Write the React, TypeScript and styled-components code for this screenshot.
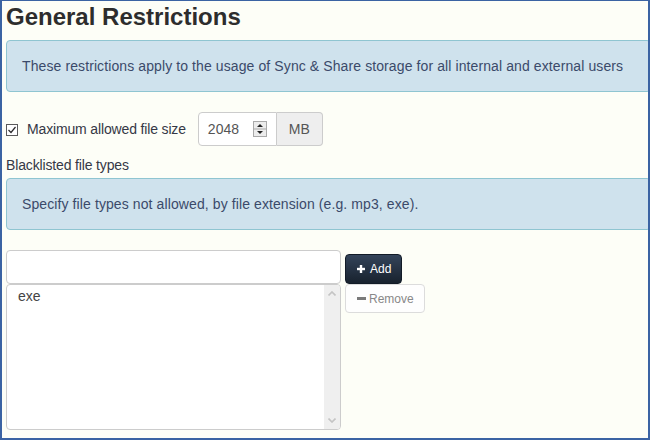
import React from "react";
import styled, { createGlobalStyle } from "styled-components";

const GlobalStyle = createGlobalStyle`
  html, body {
    margin: 0;
    padding: 0;
    background: #fdfef7;
  }

  * {
    box-sizing: border-box;
  }
`;

const Frame = styled.div`
  width: 650px;
  height: 440px;
  border: 2px solid #3b63a3;
  border-top-width: 1px;
  background: #fdfef7;
  padding: 2px 0 0 4px;
  overflow: hidden;
  font-family: "Liberation Sans", Arial, sans-serif;
  font-size: 14px;
  line-height: 20px;
  color: #353846;
`;

const Title = styled.h1`
  margin: 0 0 9px 0;
  font-size: 24px;
  line-height: 28px;
  font-weight: 700;
  color: #2d2d2d;
`;

const Alert = styled.div`
  margin: 0 -3px 20px 0;
  padding: 15px;
  border: 1px solid #8fc5d1;
  border-radius: 4px;
  background-color: #cfe2ed;
  color: #3b4a6a;
  letter-spacing: 0.1px;
`;

const SizeRow = styled.div`
  display: flex;
  align-items: center;
  height: 34px;
`;

const CheckBox = styled.span`
  display: inline-flex;
  width: 12px;
  height: 12px;
  margin: 2px 9px 0 0;

  svg {
    display: block;
  }
`;

const FieldLabel = styled.label`
  display: block;
  letter-spacing: -0.15px;
`;

const InlineLabel = styled(FieldLabel)`
  margin-right: 12px;
`;

const InputGroup = styled.div`
  display: flex;
  height: 34px;
`;

const NumberBox = styled.div`
  display: flex;
  align-items: center;
  justify-content: space-between;
  width: 79px;
  padding: 0 9px 0 9px;
  background: #fff;
  border: 1px solid #ccc;
  border-radius: 4px 0 0 4px;
  color: #555;

  svg {
    display: block;
  }
`;

const Addon = styled.span`
  display: flex;
  align-items: center;
  padding: 0 12px;
  background: #eee;
  border: 1px solid #ccc;
  border-left: 0;
  border-radius: 0 4px 4px 0;
  color: #555;
`;

const ListLabel = styled(FieldLabel)`
  margin: 9px 0 3px;
`;

const ListGrid = styled.div`
  display: grid;
  grid-template-columns: 335px auto;
  column-gap: 4px;
  justify-content: start;
  align-items: start;
`;

const TextField = styled.input`
  display: block;
  width: 335px;
  height: 34px;
  margin: 0;
  padding: 6px 12px;
  background: #fff;
  border: 1px solid #ccc;
  border-radius: 4px;
  font: inherit;
  color: #555;
  outline: none;
`;

const Button = styled.button<{ $dark?: boolean }>`
  display: inline-flex;
  align-items: center;
  gap: ${(p) => (p.$dark ? "5px" : "3px")};
  margin: 0;
  padding: 0 10px 0 11px;
  font-family: "Liberation Sans", Arial, sans-serif;
  font-size: 12px;
  border-radius: 4px;
  cursor: pointer;
  height: ${(p) => (p.$dark ? "30px" : "29px")};
  align-self: ${(p) => (p.$dark ? "end" : "start")};
  justify-self: start;
  color: ${(p) => (p.$dark ? "#fff" : "#888")};
  border: 1px solid ${(p) => (p.$dark ? "#121b27" : "#dcdcdc")};
  background: ${(p) =>
    p.$dark ? "linear-gradient(#34445a, #18222e)" : "#fefefe"};

  svg {
    display: block;
  }
`;

const ListBox = styled.div`
  display: flex;
  width: 335px;
  height: 146px;
  background: #fff;
  border: 1px solid #ccc;
  border-radius: 4px;
  overflow: hidden;
`;

const Options = styled.div`
  flex: 1;
  padding: 1px 11px;
  color: #444;
`;

const ScrollBar = styled.div`
  display: flex;
  flex-direction: column;
  justify-content: space-between;
  align-items: center;
  width: 16px;
  padding: 6px 0 6px;
  background: #efefef;

  svg {
    display: block;
  }
`;

const Chevron = ({ down }: { down?: boolean }) => (
  <svg width="8" height="5" viewBox="0 0 8 5">
    <path
      d={down ? "M0.5 0.5 L4 4 L7.5 0.5" : "M0.5 4.5 L4 1 L7.5 4.5"}
      fill="none"
      stroke="#c4c4c4"
      strokeWidth="1.6"
    />
  </svg>
);

const Spinner = () => (
  <svg width="14" height="16" viewBox="0 0 14 16">
    <rect x="0.5" y="0.5" width="13" height="15" fill="#ececec" stroke="#a9a9a9" />
    <line x1="1" y1="8" x2="13" y2="8" stroke="#a9a9a9" />
    <path d="M4 6 L7 3 L10 6 Z" fill="#222" />
    <path d="M4 10 L10 10 L7 13 Z" fill="#222" />
  </svg>
);

const Check = () => (
  <svg width="12" height="12" viewBox="0 0 12 12">
    <rect x="0.5" y="0.5" width="11" height="11" fill="#fff" stroke="#5a5a5a" />
    <path d="M2.5 6 L5 8.5 L9.5 3" fill="none" stroke="#2a2a2a" strokeWidth="1.2" />
  </svg>
);

const PlusIcon = () => (
  <svg width="8" height="8" viewBox="0 0 8 8">
    <rect x="2.8" y="0" width="2.4" height="8" fill="#fff" />
    <rect x="0" y="2.8" width="8" height="2.4" fill="#fff" />
  </svg>
);

const MinusIcon = () => (
  <svg width="9" height="3" viewBox="0 0 9 3">
    <rect x="0" y="0" width="9" height="3" fill="#7a7a7a" />
  </svg>
);

export default function App() {
  return (
    <>
      <GlobalStyle />
      <Frame>
        <Title>General Restrictions</Title>
        <Alert>
          These restrictions apply to the usage of Sync &amp; Share storage for all internal and
          external users
        </Alert>

        <SizeRow>
          <CheckBox>
            <Check />
          </CheckBox>
          <InlineLabel>Maximum allowed file size</InlineLabel>
          <InputGroup>
            <NumberBox>
              <span>2048</span>
              <Spinner />
            </NumberBox>
            <Addon>MB</Addon>
          </InputGroup>
        </SizeRow>

        <ListLabel>Blacklisted file types</ListLabel>
        <Alert>Specify file types not allowed, by file extension (e.g. mp3, exe).</Alert>

        <ListGrid>
          <TextField type="text" />
          <Button $dark>
            <PlusIcon />
            Add
          </Button>
          <ListBox>
            <Options>exe</Options>
            <ScrollBar>
              <Chevron />
              <Chevron down />
            </ScrollBar>
          </ListBox>
          <Button>
            <MinusIcon />
            Remove
          </Button>
        </ListGrid>
      </Frame>
    </>
  );
}
